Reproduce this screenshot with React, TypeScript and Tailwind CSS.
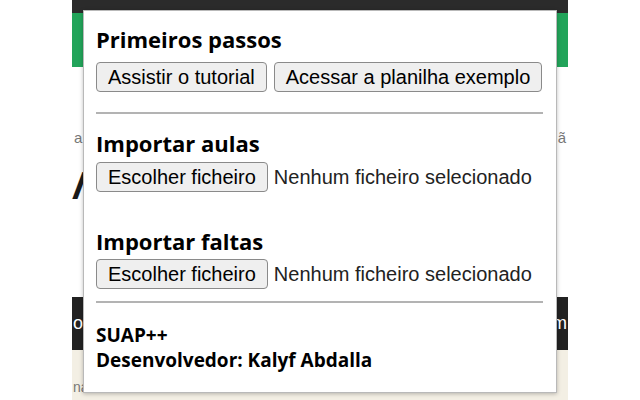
import React from "react";

const head = { fontFamily: '"Open Sans", "Noto Sans", sans-serif' };
const ui = { fontFamily: '"Liberation Sans", Arial, sans-serif' };

const Btn = ({ children }: { children: React.ReactNode }) => (
  <button
    style={ui}
    className="h-[30px] px-[11px] text-[20px] leading-none text-black bg-[#efefef] border border-[#8a8a8a] rounded-[4px]"
  >
    {children}
  </button>
);

const FilePick = () => (
  <div className="flex items-center gap-[6px]">
    <Btn>Escolher ficheiro</Btn>
    <span style={ui} className="text-[20px] leading-none text-[#222]">
      Nenhum ficheiro selecionado
    </span>
  </div>
);

const App = () => {
  return (
    <div className="relative w-[640px] h-[400px] bg-white overflow-hidden">
      {/* page behind the popup */}
      <div className="ml-[72px] w-[496px] h-full flex flex-col">
        <div className="h-[13px] bg-[#2b2b2b]" />
        <div className="h-[54px] bg-[#22a45a]" />
        <div className="h-[230px] bg-white flex flex-col">
          <div
            style={ui}
            className="mt-[63px] flex justify-between text-[15px] text-[#777] leading-none px-[2px]"
          >
            <span>a</span>
            <span>ã</span>
          </div>
          <div
            style={head}
            className="mt-[20px] text-[38px] font-bold leading-none text-[#1a1a1a]"
          >
            /
          </div>
        </div>
        <div
          style={ui}
          className="h-[53px] bg-[#222] flex items-center justify-between text-white text-[18px] px-[1px]"
        >
          <span>o</span>
          <span>m</span>
        </div>
        <div className="flex-1 bg-[#f3efe4] pt-[30px]">
          <div style={ui} className="text-[14px] leading-none text-[#777] pl-[1px]">
            na
          </div>
        </div>
      </div>

      {/* extension popup */}
      <div className="absolute left-[83px] top-[10px] w-[474px] h-[383px] bg-white border border-[#b9b9b9] shadow-[0_1px_4px_rgba(0,0,0,0.25)] px-[12px] flex flex-col">
        <h3 style={head} className="mt-[14px] text-[22px] leading-[28px] font-bold text-black">
          Primeiros passos
        </h3>
        <div className="mt-[9px] flex gap-[7px]">
          <Btn>Assistir o tutorial</Btn>
          <Btn>Acessar a planilha exemplo</Btn>
        </div>
        <div className="mt-[20px] mr-[1px] border-t-2 border-[#b3b3b3]" />

        <h3 style={head} className="mt-[15px] text-[22px] leading-[28px] font-bold text-black">
          Importar aulas
        </h3>
        <div className="mt-[5px]">
          <FilePick />
        </div>

        <h3 style={head} className="mt-[35px] text-[22px] leading-[28px] font-bold text-black">
          Importar faltas
        </h3>
        <div className="mt-[4px]">
          <FilePick />
        </div>
        <div className="mt-[12px] mr-[1px] border-t-2 border-[#b3b3b3]" />

        <div style={head} className="mt-[20px] text-[19px] leading-[25px] font-bold text-black">
          SUAP++
        </div>
        <div style={head} className="text-[19px] leading-[25px] font-bold text-black">
          Desenvolvedor: Kalyf Abdalla
        </div>
      </div>
    </div>
  );
};

export default App;
